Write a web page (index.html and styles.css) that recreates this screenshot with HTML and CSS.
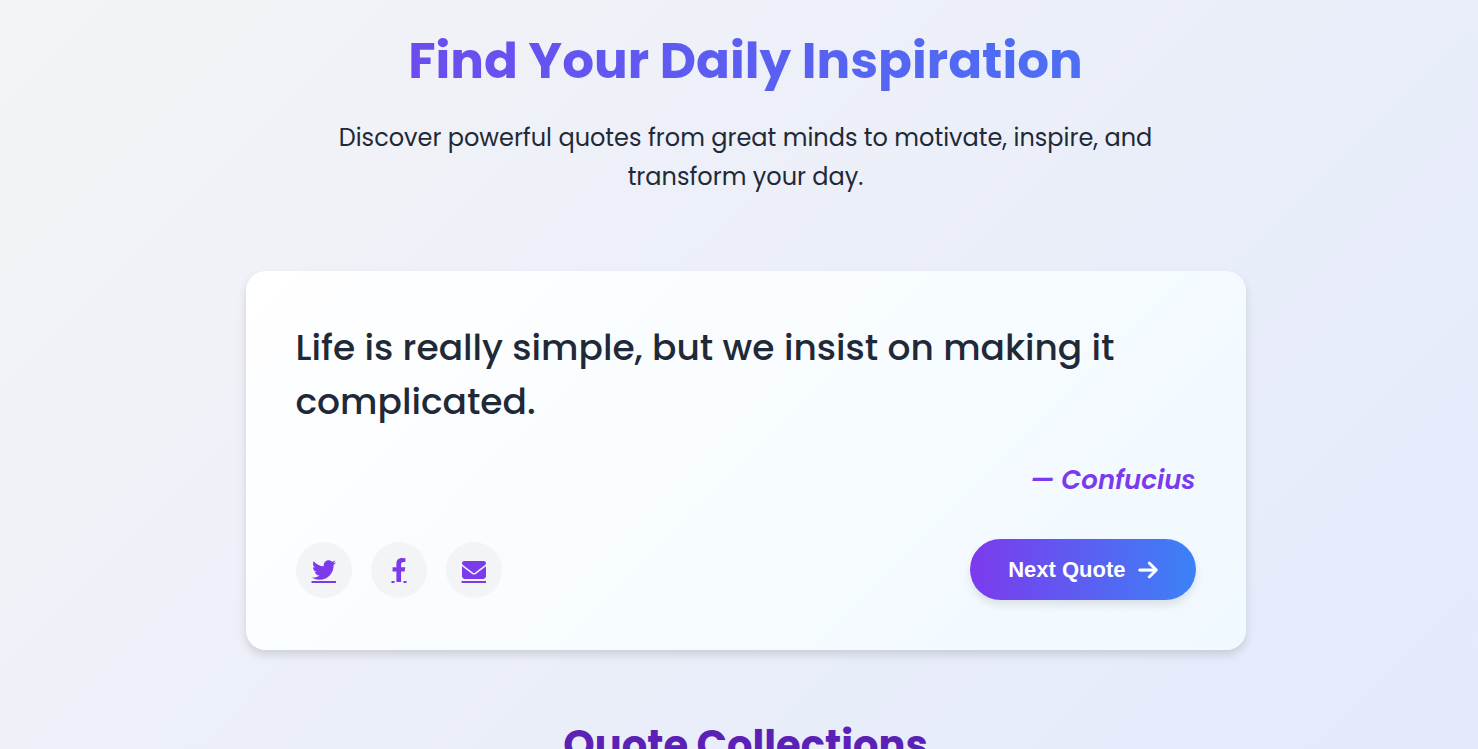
FILE: index.html
```html
<!DOCTYPE html>
<html lang="en">
<head>
<meta charset="utf-8">
<meta name="viewport" content="width=device-width, initial-scale=1">
<title>Find Your Daily Inspiration</title>
<link rel="stylesheet" href="styles.css">
</head>
<body>
<main class="page">
  <header class="hero">
    <h1 class="hero-title">Find Your Daily Inspiration</h1>
    <p class="hero-text">Discover powerful quotes from great minds to motivate, inspire, and transform your day.</p>
  </header>

  <section class="quote-card" aria-label="Daily quote">
    <p class="quote-text">Life is really simple, but we insist on making it complicated.</p>
    <p class="quote-author">— Confucius</p>
    <div class="quote-actions">
      <div class="share">
        <a class="share-link" href="#" aria-label="Share on Twitter">
          <svg class="icon" viewBox="0 0 512 512" aria-hidden="true"><path d="M459.37 151.716c.325 4.548.325 9.097.325 13.645 0 138.72-105.583 298.558-298.558 298.558-59.452 0-114.68-17.219-161.137-47.106 8.447.974 16.568 1.299 25.34 1.299 49.055 0 94.213-16.568 130.274-44.832-46.132-.975-84.792-31.188-98.112-72.772 6.498.974 12.995 1.624 19.818 1.624 9.421 0 18.843-1.3 27.614-3.573-48.081-9.747-84.143-51.98-84.143-102.985v-1.299c13.969 7.797 30.214 12.67 47.431 13.319-28.264-18.843-46.781-51.005-46.781-87.391 0-19.492 5.197-37.36 14.294-52.954 51.655 63.675 129.3 105.258 216.365 109.807-1.624-7.797-2.599-15.918-2.599-24.04 0-57.828 46.782-104.934 104.934-104.934 30.213 0 57.502 12.67 76.67 33.137 23.715-4.548 46.456-13.32 66.599-25.34-7.798 24.366-24.366 44.833-46.132 57.827 21.117-2.273 41.584-8.122 60.426-16.243-14.292 20.791-32.161 39.308-52.628 54.253z"/><path d="M-10 491H512v42H-10z"/></svg>
        </a>
        <a class="share-link" href="#" aria-label="Share on Facebook">
          <svg class="icon" viewBox="-96 0 512 512" aria-hidden="true"><path d="M279.14 288l14.22-92.66h-88.91v-60.13c0-25.35 12.42-50.06 52.24-50.06h40.42V6.26S260.43 0 225.36 0c-73.22 0-121.08 44.38-121.08 124.72v70.62H22.89V288h81.39v224h100.17V288z"/><path d="M0 491H64v42H0zM256 491h64v42h-64z"/></svg>
        </a>
        <a class="share-link" href="#" aria-label="Share by email">
          <svg class="icon" viewBox="0 0 512 512" aria-hidden="true"><path d="M48 64C21.5 64 0 85.5 0 112c0 15.1 7.1 29.3 19.2 38.4L236.8 313.6c11.4 8.5 27 8.5 38.4 0L492.8 150.4c12.1-9.1 19.2-23.3 19.2-38.4c0-26.5-21.5-48-48-48H48zM0 176V384c0 35.3 28.7 64 64 64H448c35.3 0 64-28.7 64-64V176L294.4 339.2c-22.8 17.1-54 17.1-76.8 0L0 176z"/><path d="M-10 491H512v42H-10z"/></svg>
        </a>
      </div>
      <button class="next" type="button">
        Next Quote
        <svg class="next-icon" viewBox="0 0 448 512" aria-hidden="true"><path d="M438.6 278.6c12.5-12.5 12.5-32.8 0-45.3l-160-160c-12.5-12.5-32.8-12.5-45.3 0s-12.5 32.8 0 45.3L338.8 224 32 224c-17.7 0-32 14.3-32 32s14.3 32 32 32l306.7 0L233.4 393.4c-12.5 12.5-12.5 32.8 0 45.3s32.8 12.5 45.3 0l160-160z"/></svg>
      </button>
    </div>
  </section>

  <h2 class="section-title">Quote Collections</h2>
</main>
</body>
</html>
```
FILE: styles.css
```css
* {
  box-sizing: border-box;
}

html {
  height: 100%;
  overflow: hidden;
}

body {
  margin: 0;
  min-height: 100%;
  background: linear-gradient(135deg, #f3f4f6, #e4eafc) no-repeat;
  color: #1f2937;
  font-family: Poppins, Inter, sans-serif;
}

.page {
  padding: 21px 32px 20px 45px;
}

.hero {
  margin-bottom: 75px;
  text-align: center;
}

.hero-title {
  margin: 0 0 17px;
  background: linear-gradient(90deg, #7c3aed, #3b82f6);
  background-clip: text;
  -webkit-background-clip: text;
  color: transparent;
  font-size: 50px;
  font-weight: 700;
  line-height: 80px;
}

.hero-text {
  max-width: 875px;
  margin: 0 auto;
  font-size: 24px;
  line-height: 39px;
}

.quote-card {
  max-width: 1000px;
  margin: 0 auto;
  padding: 50px;
  border-radius: 20px;
  background: linear-gradient(135deg, #ffffff, #f0f9ff);
  box-shadow: 0 5px 10px rgba(0, 0, 0, 0.13);
}

.quote-text {
  margin: 0 0 31px;
  font-size: 36px;
  font-weight: 500;
  line-height: 54px;
}

.quote-author {
  margin: 0 0 39px;
  color: #7c3aed;
  font-size: 26px;
  font-style: italic;
  font-weight: 600;
  line-height: 40px;
  text-align: right;
}

.quote-actions {
  display: flex;
  align-items: center;
  justify-content: space-between;
}

.share {
  display: flex;
  gap: 19px;
}

.share-link {
  display: grid;
  place-items: center;
  width: 56px;
  height: 56px;
  border-radius: 50%;
  background: #f3f4f6;
  color: #7c3aed;
}

.icon {
  width: 24px;
  height: 24px;
  fill: currentColor;
  overflow: visible;
}

.next {
  display: flex;
  align-items: center;
  gap: 12px;
  padding: 18px 38px;
  border: 0;
  border-radius: 31px;
  background: linear-gradient(90deg, #7c3aed, #3b82f6);
  box-shadow: 0 5px 8px rgba(0, 0, 0, 0.1);
  color: #ffffff;
  font-family: "Liberation Sans", Arial, sans-serif;
  font-size: 22px;
  font-weight: 700;
  line-height: 25px;
  cursor: pointer;
}

.next-icon {
  width: 20px;
  height: 22px;
  fill: currentColor;
  stroke: currentColor;
  stroke-width: 8;
}

.section-title {
  margin: 63px 0 0;
  color: #5b21b6;
  font-size: 40px;
  font-weight: 700;
  line-height: 64px;
  text-align: center;
}
```
